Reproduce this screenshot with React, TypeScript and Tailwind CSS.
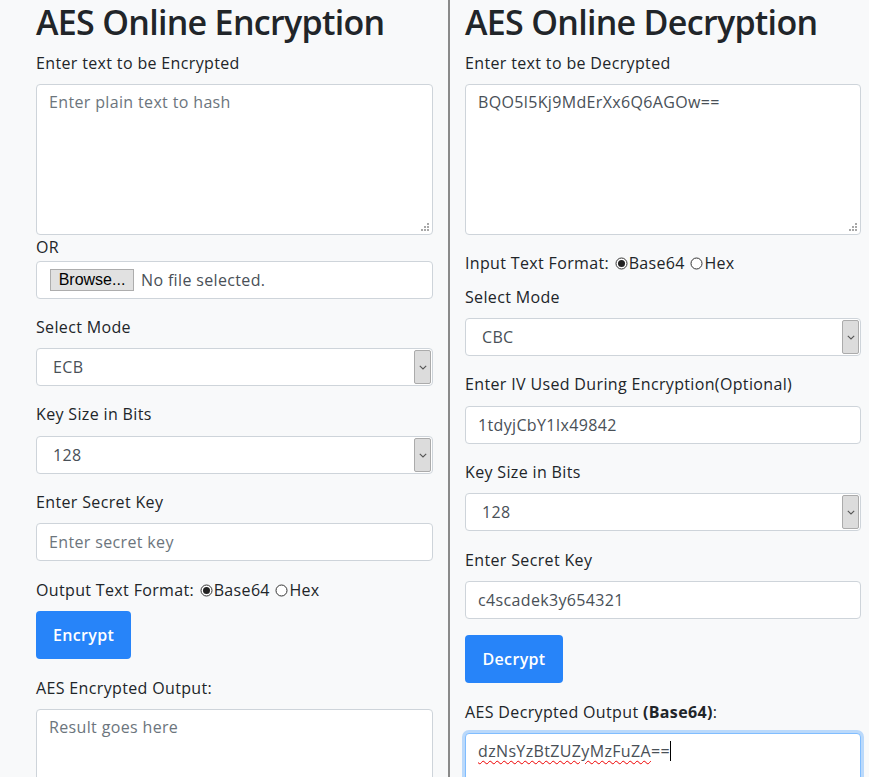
import React from "react";

const font = { fontFamily: '"Open Sans", "Noto Sans", sans-serif' };

function Radio({ checked }: { checked?: boolean }) {
  return (
    <svg width="13" height="13" viewBox="0 0 13 13" className="inline-block mx-[1px] -mt-[2px] align-middle">
      <circle cx="6.5" cy="6.5" r="5.5" fill="white" stroke="#333" strokeWidth="1" />
      {checked && <circle cx="6.5" cy="6.5" r="3.5" fill="#222" />}
    </svg>
  );
}

function Grip() {
  return (
    <svg width="8" height="8" viewBox="0 0 8 8" className="absolute right-[3px] bottom-[3px]">
      <rect x="6" y="0" width="2" height="2" fill="#a8a8a8" />
      <rect x="3" y="3" width="2" height="2" fill="#a8a8a8" />
      <rect x="6" y="3" width="2" height="2" fill="#a8a8a8" />
      <rect x="0" y="6" width="2" height="2" fill="#a8a8a8" />
      <rect x="3" y="6" width="2" height="2" fill="#a8a8a8" />
      <rect x="6" y="6" width="2" height="2" fill="#a8a8a8" />
    </svg>
  );
}

function Select({ value }: { value: string }) {
  return (
    <div className="h-[38px] border border-[#ced4da] rounded-[4px] bg-white flex items-stretch">
      <div className="flex-1 flex items-center pl-[16px] text-[16px] text-[#495057]">{value}</div>
      <div className="w-[17px] my-[1px] mr-[1px] bg-[#dcdcdc] border border-[#ababab] rounded-[2px] flex items-center justify-center">
        <svg width="8" height="5" viewBox="0 0 8 5">
          <path d="M0.8 0.8 L4 4 L7.2 0.8" fill="none" stroke="#555" strokeWidth="1.1" />
        </svg>
      </div>
    </div>
  );
}

function Input({ value, placeholder }: { value?: string; placeholder?: string }) {
  return (
    <div className="h-[38px] border border-[#ced4da] rounded-[4px] bg-white flex items-center px-[12px] text-[16px]">
      {value ? <span className="text-[#495057]">{value}</span> : <span className="text-[#6c757d]">{placeholder}</span>}
    </div>
  );
}

function Label({ children, className = "" }: { children: React.ReactNode; className?: string }) {
  return <div className={"text-[16px] leading-[24px] " + className}>{children}</div>;
}

export default function App() {
  return (
    <div className="min-h-screen bg-[#f8f9fa] flex text-[#212529] overflow-hidden h-[777px] tracking-[0.35px]" style={font}>
      {/* Left column */}
      <div className="w-[448px] shrink-0 pl-[36px] pr-[15px]">
        <h1 className="text-[34px] font-semibold tracking-[-0.7px] leading-[40px] h-[51px] pt-[2px]">AES Online Encryption</h1>
        <Label className="mb-[9px]">Enter text to be Encrypted</Label>
        <div className="relative h-[151px] border border-[#ced4da] rounded-[4px] bg-white px-[12px] py-[5px] text-[16px] leading-[24px] text-[#6c757d]">
          Enter plain text to hash
          <Grip />
        </div>
        <Label className="mb-[2px]">OR</Label>
        <div className="h-[38px] border border-[#ced4da] rounded-[4px] bg-white flex items-center pl-[13px] text-[16px] text-[#495057]">
          <div
            className="h-[22px] w-[84px] bg-[#e1e1e1] border border-[#adadad] flex items-center justify-center text-[16px] text-black tracking-normal"
            style={{ fontFamily: '"Liberation Sans", Arial, sans-serif' }}
          >
            Browse...
          </div>
          <span className="ml-[7px]">No file selected.</span>
        </div>
        <Label className="mt-[16px] mb-[9px]">Select Mode</Label>
        <Select value="ECB" />
        <Label className="mt-[16px] mb-[10px]">Key Size in Bits</Label>
        <Select value="128" />
        <Label className="mt-[16px] mb-[9px]">Enter Secret Key</Label>
        <Input placeholder="Enter secret key" />
        <Label className="mt-[17px] mb-[9px]">
          Output Text Format: <Radio checked />Base64 <Radio />Hex
        </Label>
        <button className="w-[95px] h-[48px] rounded-[4px] bg-[#2784f9] text-white text-[16px] font-semibold">Encrypt</button>
        <Label className="mt-[17px] mb-[9px]">AES Encrypted Output:</Label>
        <div className="h-[120px] border border-[#ced4da] rounded-[4px] bg-white px-[12px] py-[5px] text-[16px] leading-[24px] text-[#6c757d]">
          Result goes here
        </div>
      </div>

      {/* Divider */}
      <div className="w-[2px] shrink-0 bg-[#8a8a8a]" />

      {/* Right column */}
      <div className="w-[419px] shrink-0 pl-[15px] pr-[8px]">
        <h1 className="text-[34px] font-semibold tracking-[-0.7px] leading-[40px] h-[51px] pt-[2px]">AES Online Decryption</h1>
        <Label className="mb-[9px]">Enter text to be Decrypted</Label>
        <div className="relative h-[151px] border border-[#ced4da] rounded-[4px] bg-white px-[12px] py-[5px] text-[16px] leading-[24px] text-[#495057]">
          BQO5l5Kj9MdErXx6Q6AGOw==
          <Grip />
        </div>
        <Label className="mt-[16px]">
          Input Text Format: <Radio checked />Base64 <Radio />Hex
        </Label>
        <Label className="mt-[10px] mb-[9px]">Select Mode</Label>
        <Select value="CBC" />
        <Label className="mt-[16px] mb-[10px]">Enter IV Used During Encryption(Optional)</Label>
        <Input value="1tdyjCbY1Ix49842" />
        <Label className="mt-[16px] mb-[9px]">Key Size in Bits</Label>
        <Select value="128" />
        <Label className="mt-[17px] mb-[9px]">Enter Secret Key</Label>
        <Input value="c4scadek3y654321" />
        <button className="mt-[16px] w-[98px] h-[48px] rounded-[4px] bg-[#2784f9] text-white text-[16px] font-semibold">Decrypt</button>
        <Label className="mt-[17px] mb-[9px]">
          AES Decrypted Output <span className="font-bold">(Base64)</span>:
        </Label>
        <div className="h-[120px] border border-[#80bdff] rounded-[4px] bg-white px-[12px] py-[5px] text-[16px] leading-[24px] text-[#495057] shadow-[0_0_0_3px_rgba(0,123,255,0.25)]">
          <span className="underline decoration-wavy decoration-[#e00] decoration-1 underline-offset-[3px]">dzNsYzBtZUZyMzFuZA</span>
          ==
          <span className="inline-block w-[1px] h-[20px] bg-black align-middle -mt-[3px]" />
        </div>
      </div>
    </div>
  );
}
